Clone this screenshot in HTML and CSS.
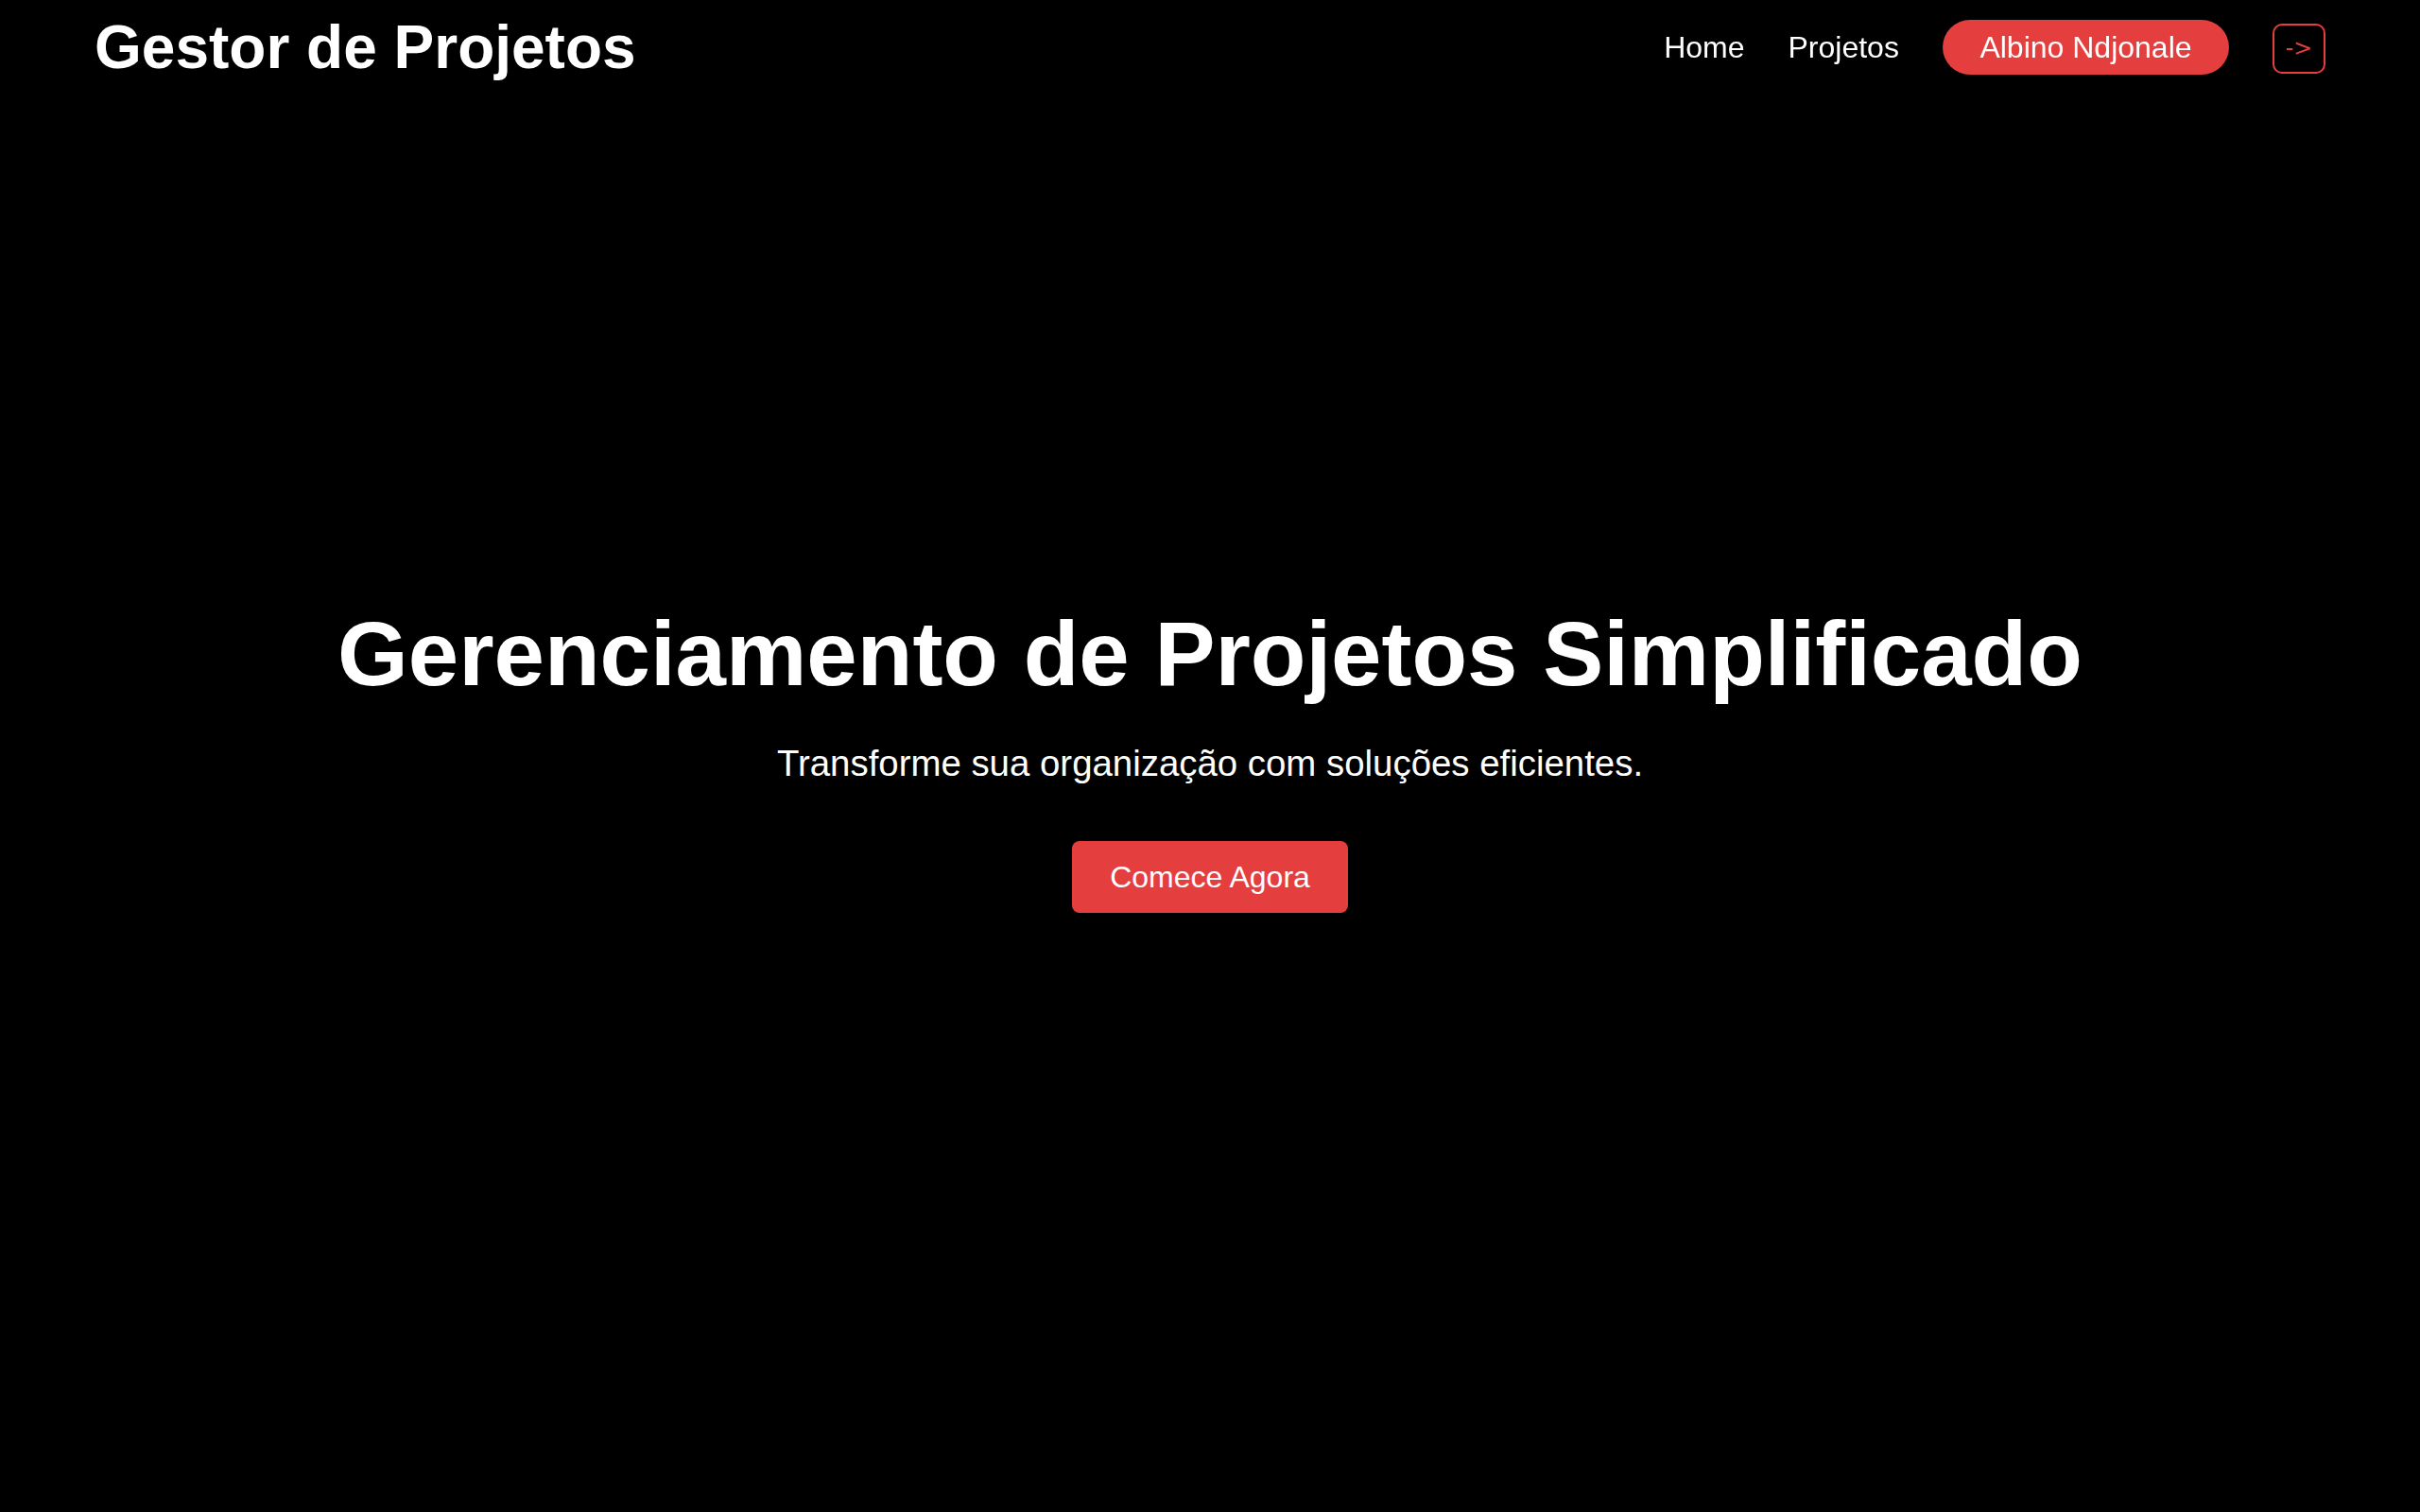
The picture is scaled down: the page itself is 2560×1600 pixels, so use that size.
FILE: index.html
```html
<!DOCTYPE html>
<html lang="pt">
<head>
<meta charset="utf-8">
<title>Gestor de Projetos</title>
<link rel="stylesheet" href="styles.css">
</head>
<body>
<header class="topbar">
  <h1 class="brand">Gestor de Projetos</h1>
  <nav class="nav">
    <a class="nav-link" href="#">Home</a>
    <a class="nav-link" href="#">Projetos</a>
    <span class="user-pill">Albino Ndjonale</span>
    <button class="logout-btn" type="button">-&gt;</button>
  </nav>
</header>
<main class="hero">
  <h2 class="hero-title">Gerenciamento de Projetos Simplificado</h2>
  <p class="hero-sub">Transforme sua organização com soluções eficientes.</p>
  <a class="cta" href="#">Comece Agora</a>
</main>
</body>
</html>
```

FILE: styles.css
```css
* { box-sizing: border-box; }

html, body {
  margin: 0;
  padding: 0;
  background: #000;
  color: #fff;
  font-family: "Liberation Sans", Arial, sans-serif;
}

.topbar {
  position: fixed;
  top: 0;
  left: 0;
  right: 0;
  display: flex;
  align-items: center;
  justify-content: space-between;
  padding: 13px 100px;
}

.brand {
  margin: 0;
  font-size: 64px;
  font-weight: 700;
  line-height: normal;
}

.nav {
  display: flex;
  align-items: center;
  gap: 46px;
}

.nav-link {
  color: #fff;
  text-decoration: none;
  font-size: 32px;
  line-height: 38px;
}

.user-pill {
  background: #e53e3e;
  color: #fff;
  font-size: 32px;
  line-height: 38px;
  padding: 10px 39.5px;
  border-radius: 30px;
}

.logout-btn {
  background: transparent;
  color: #e53e3e;
  border: 2px solid #e53e3e;
  border-radius: 10px;
  font-family: "DejaVu Sans", sans-serif;
  font-size: 24px;
  line-height: 29px;
  padding: 10px 11.6px;
  margin: 2px 0 0;
}

.hero {
  min-height: 100vh;
  display: flex;
  flex-direction: column;
  align-items: center;
  justify-content: center;
  text-align: center;
  padding-top: 2px;
}

.hero-title {
  margin: 0 0 39px;
  font-size: 96px;
  font-weight: 700;
  line-height: normal;
}

.hero-sub {
  margin: 0 0 60px;
  font-size: 38.4px;
  line-height: normal;
}

.cta {
  display: inline-block;
  background: #e53e3e;
  color: #fff;
  text-decoration: none;
  font-size: 32px;
  line-height: 36px;
  padding: 20px 40px;
  border-radius: 8px;
}
```
